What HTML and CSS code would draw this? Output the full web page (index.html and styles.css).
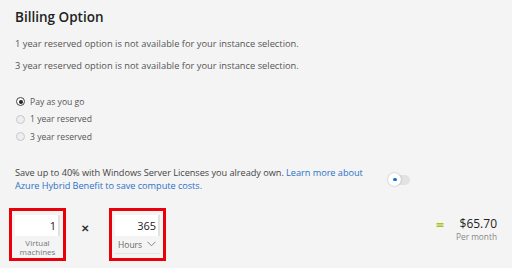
FILE: index.html
```html
<!DOCTYPE html>
<html lang="en">
<head>
    <meta charset="UTF-8">
    <title>Billing Option</title>
    <link rel="stylesheet" href="styles.css">
</head>
<body>
    <div class="panel">
        <h2 class="title">Billing Option</h2>

        <p class="note">1 year reserved option is not available for your instance selection.</p>
        <p class="note">3 year reserved option is not available for your instance selection.</p>

        <div class="radios">
            <label class="radio"><span class="dot checked"></span>Pay as you go</label>
            <label class="radio"><span class="dot"></span>1 year reserved</label>
            <label class="radio"><span class="dot"></span>3 year reserved</label>
        </div>

        <div class="hybrid">
            <p class="hybrid-text">Save up to 40% with Windows Server Licenses you already own. <a href="#">Learn more about<br>Azure Hybrid Benefit to save compute costs.</a></p>
            <span class="toggle"><span class="knob"></span></span>
        </div>

        <div class="calc">
            <div class="box">
                <div class="field">1</div>
                <div class="caption">Virtual<br>machines</div>
            </div>
            <span class="times">&#x2715;</span>
            <div class="box">
                <div class="field">365</div>
                <div class="select">Hours
                    <svg width="9" height="6" viewBox="0 0 9 6"><path d="M0.5 0.8 L4.5 4.8 L8.5 0.8" fill="none" stroke="#777" stroke-width="0.9"/></svg>
                </div>
            </div>
            <div class="spacer"></div>
            <span class="equals">=</span>
            <div class="total">
                <div class="amount">$65.70</div>
                <div class="period">Per month</div>
            </div>
        </div>
    </div>
</body>
</html>
```

FILE: styles.css
```css
body {
    margin: 0;
    background: #f4f4f4;
    font-family: "Open Sans", "Noto Sans", Arial, sans-serif;
    color: #444;
}
.panel {
    padding: 7px 15px 0 15px;
}
.title {
    margin: 0;
    font-size: 13.5px;
    font-weight: 600;
    color: #222;
    line-height: 20px;
}
.note {
    margin: 0;
    font-size: 9.3px;
    line-height: 22px;
    color: #555;
}
.title + .note {
    margin-top: 6px;
}
.radios {
    margin-top: 16px;
}
.radio {
    display: flex;
    align-items: center;
    font-size: 8.6px;
    height: 17.5px;
    color: #555;
}
.dot {
    width: 7px;
    height: 7px;
    border: 1px solid #c8c8c8;
    border-radius: 50%;
    background: #eee;
    margin: 0 5px 0 1px;
    position: relative;
}
.dot.checked {
    border-color: #444;
    background: #fff;
}
.dot.checked::after {
    content: "";
    position: absolute;
    left: 1.5px;
    top: 1.5px;
    width: 4px;
    height: 4px;
    border-radius: 50%;
    background: #222;
}
.hybrid {
    display: flex;
    align-items: center;
    margin-top: 20px;
}
.hybrid-text {
    margin: 0;
    width: 362px;
    font-size: 9.2px;
    letter-spacing: -0.04px;
    line-height: 13.5px;
    color: #444;
}
.hybrid-text a {
    color: #2b72c8;
    text-decoration: none;
}
.toggle {
    margin-left: 13px;
    margin-top: 1px;
    width: 20px;
    height: 10px;
    border-radius: 5px;
    background: #e2e2e2;
    position: relative;
}
.knob {
    position: absolute;
    left: -2px;
    top: -2px;
    width: 13px;
    height: 13px;
    border-radius: 50%;
    background: #fff;
    box-shadow: 0 0 2px rgba(0,0,0,0.3);
}
.knob::after {
    content: "";
    position: absolute;
    left: 5px;
    top: 5px;
    width: 3.5px;
    height: 3.5px;
    border-radius: 50%;
    background: #1a6fd0;
}
.calc {
    display: flex;
    align-items: flex-start;
    margin: 15px 0 0 -6px;
}
.box {
    box-sizing: border-box;
    width: 57px;
    height: 53px;
    border: 3px solid #e8000b;
    padding: 4px 3px 0 3px;
}
.field {
    background: #fff;
    height: 21px;
    text-align: right;
    font-size: 11px;
    line-height: 22px;
    padding-right: 2px;
    color: #222;
    border-right: 2px solid #e2e2e2;
}
.caption {
    text-align: center;
    font-size: 8px;
    line-height: 9.5px;
    color: #777;
    margin-top: 2px;
}
.select {
    display: flex;
    justify-content: space-between;
    align-items: center;
    height: 17px;
    border-bottom: 1px solid #e4e4e4;
    font-size: 8.5px;
    color: #666;
    padding: 0 4px 0 3px;
}
.times {
    font-size: 10px;
    font-weight: 700;
    color: #333;
    margin: 13px 20px 0 15px;
}
.spacer {
    flex: 1;
}
.equals {
    font-size: 14px;
    font-weight: 700;
    color: #a6c51c;
    margin: 8px 12px 0 0;
    line-height: 18px;
}
.total {
    text-align: right;
    margin-top: 8px;
}
.amount {
    font-size: 12px;
    line-height: 15px;
    color: #222;
}
.period {
    font-size: 8.3px;
    line-height: 11px;
    color: #888;
}
```
